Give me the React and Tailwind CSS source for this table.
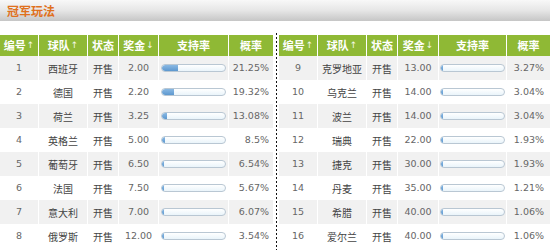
import React from "react";

const left = [
  ["1", "西班牙", "2.00", 16, "21.25%"],
  ["2", "德国", "2.20", 12, "19.32%"],
  ["3", "荷兰", "3.25", 5, "13.08%"],
  ["4", "英格兰", "5.00", 3, "8.5%"],
  ["5", "葡萄牙", "6.50", 2, "6.54%"],
  ["6", "法国", "7.50", 2, "5.67%"],
  ["7", "意大利", "7.00", 2, "6.07%"],
  ["8", "俄罗斯", "12.00", 2, "3.54%"],
];
const right = [
  ["9", "克罗地亚", "13.00", 2, "3.27%"],
  ["10", "乌克兰", "14.00", 2, "3.04%"],
  ["11", "波兰", "14.00", 2, "3.04%"],
  ["12", "瑞典", "22.00", 2, "1.93%"],
  ["13", "捷克", "30.00", 2, "1.93%"],
  ["14", "丹麦", "35.00", 2, "1.21%"],
  ["15", "希腊", "40.00", 2, "1.06%"],
  ["16", "爱尔兰", "40.00", 2, "1.06%"],
];

const cjk = "font-['Noto_Sans_CJK_SC',sans-serif]";
const num = "font-['DejaVu_Sans','Noto_Sans_CJK_SC',sans-serif]";

function Arrow({ down }) {
  return (
    <span className="ml-[1px] text-[9px] font-normal font-['DejaVu_Sans',sans-serif] text-[#f4f8e8]">
      {down ? "↓" : "↑"}
    </span>
  );
}

function Bar({ fill }) {
  return (
    <div className="h-[8px] w-full rounded-full border border-[#b9c7d3] bg-gradient-to-b from-[#ffffff] to-[#eaf4fa] overflow-hidden">
      <div
        className="h-full rounded-l-full bg-gradient-to-b from-[#8ab9e3] to-[#5d98cf]"
        style={{ width: fill + "px" }}
      />
    </div>
  );
}

function Table({ rows, cols, widthClass, barPad, pctPad }) {
  const hcell =
    "h-[21px] flex items-center justify-center text-white font-bold text-[11px] border-r border-white";
  return (
    <div className={widthClass + " mt-[2px]"}>
      <div className={"grid bg-[#8fb935] " + cols + " " + cjk}>
        <div className={hcell}>
          编号<Arrow />
        </div>
        <div className={hcell}>
          球队<Arrow />
        </div>
        <div className={hcell}>状态</div>
        <div className={hcell}>
          奖金<Arrow down />
        </div>
        <div className={hcell}>支持率</div>
        <div className={hcell + " border-r-0"}>概率</div>
      </div>
      {rows.map((r, i) => (
        <div
          key={r[0]}
          className={
            "grid h-[24px] text-[#555] " +
            cols +
            (i % 2 === 0 ? " bg-[#f1f1f1]" : " bg-white")
          }
        >
          <div className={"flex items-center justify-center border-r border-white text-[9.5px] text-[#666] " + num}>
            {r[0]}
          </div>
          <div className={"flex items-center justify-center border-r border-white text-[10px] text-[#444] " + cjk}>
            {r[1]}
          </div>
          <div className={"flex items-center justify-center border-r border-white text-[10px] text-[#444] " + cjk}>
            开售
          </div>
          <div className={"flex items-center justify-center border-r border-white text-[9.5px] text-[#666] " + num}>
            {r[2]}
          </div>
          <div className={"flex items-center border-r border-white " + barPad}>
            <Bar fill={r[3]} />
          </div>
          <div className={"flex items-center justify-end text-[9.5px] text-[#666] " + pctPad + " " + num}>
            {r[4]}
          </div>
        </div>
      ))}
    </div>
  );
}

export default function App() {
  return (
    <div className="w-[550px] h-[250px] bg-white overflow-hidden">
      <div className="h-[21px] bg-gradient-to-b from-[#f8f8f8] via-[#e6e6e6] to-[#c6c6c6] flex items-center pl-[7px]">
        <span className={"text-[12px] font-bold text-[#e0701c] " + cjk}>冠军玩法</span>
      </div>
      <div className="flex mt-[12px]">
        <Table
          rows={left}
          cols="grid-cols-[39px_49px_31px_40px_70px_44px]"
          widthClass="w-[273px]"
          barPad="pl-[2px] pr-[2px]"
          pctPad="pr-[4px]"
        />
        <div className="w-[6px] flex justify-center">
          <div className="h-[217px] w-px bg-[repeating-linear-gradient(to_bottom,#111_0px,#111_2px,transparent_2px,transparent_4px)]" />
        </div>
        <Table
          rows={right}
          cols="grid-cols-[39px_49px_31px_41px_68px_43px]"
          widthClass="w-[271px]"
          barPad="pl-[1px] pr-[1px]"
          pctPad="pr-[6px]"
        />
      </div>
    </div>
  );
}
